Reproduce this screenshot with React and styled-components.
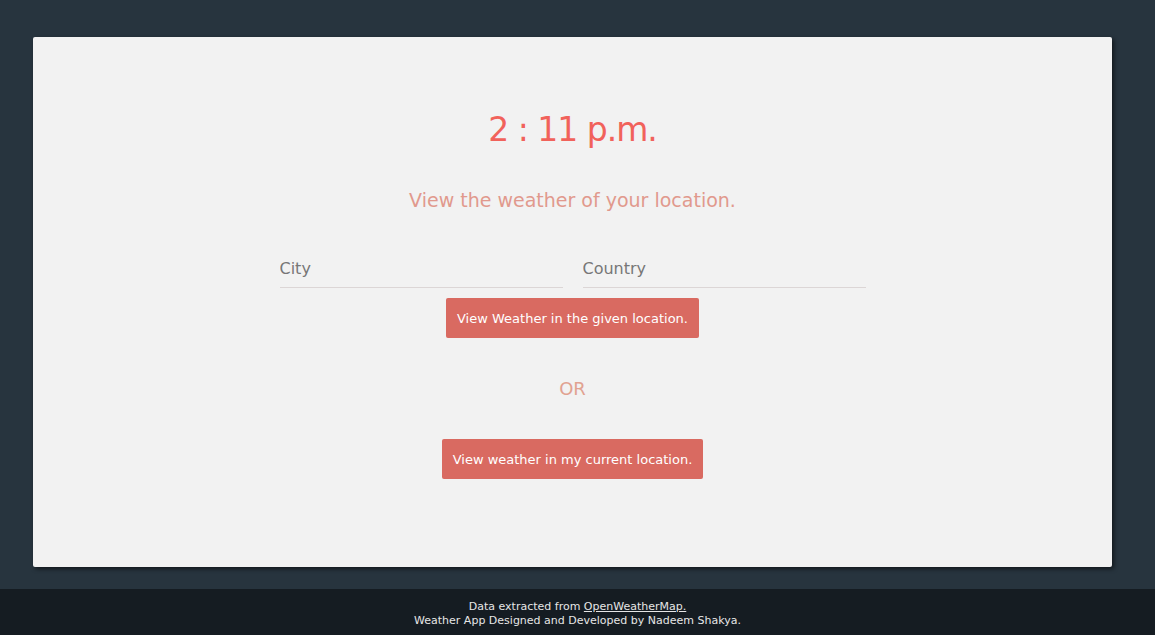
import React from "react";
import styled, { createGlobalStyle } from "styled-components";

const Global = createGlobalStyle`
  html, body { margin: 0; padding: 0; }
  body {
    background: #27343e;
    font-family: "DejaVu Sans", "Noto Sans", sans-serif;
    min-height: 635px;
  }
`;

const Page = styled.div`
  display: flex;
  flex-direction: column;
  min-height: 635px;
`;

const Main = styled.main`
  flex: 1;
  padding: 37px 43px 22px 33px;
`;

const Card = styled.section`
  background: #f2f2f2;
  border-radius: 2px;
  box-shadow: 2px 2px 4px rgba(0, 0, 0, 0.55);
  height: 530px;
  box-sizing: border-box;
  display: flex;
  flex-direction: column;
  align-items: center;
  padding-top: 67px;
`;

const Time = styled.h1`
  margin: 0;
  font-weight: 400;
  font-size: 33px;
  letter-spacing: -1px;
  line-height: 52px;
  color: #f1625b;
`;

const Subtitle = styled.p`
  margin: 32px 0 0;
  font-size: 19px;
  line-height: 24px;
  color: #e1998d;
`;

const Fields = styled.div`
  display: flex;
  gap: 20px;
  margin-top: 47px;
`;

const Input = styled.input`
  width: 283px;
  box-sizing: border-box;
  border: none;
  border-bottom: 1px solid #dcd6d6;
  background: transparent;
  padding: 0 0 8px;
  font-family: inherit;
  font-size: 16px;
  line-height: 20px;
  color: #555;
  outline: none;
  &::placeholder { color: #777; }
`;

const Button = styled.button`
  border: none;
  border-radius: 2px;
  background: #d96a61;
  color: #fff;
  font-family: inherit;
  font-size: 13px;
  height: 40px;
  padding: 0 11px;
  margin-top: ${(p) => p.$mt}px;
  cursor: pointer;
`;

const Or = styled.div`
  margin-top: 40px;
  font-size: 18px;
  line-height: 22px;
  color: #e1a291;
`;

const Footer = styled.footer`
  background: #151c22;
  height: 46px;
  box-sizing: border-box;
  padding-top: 11px;
  text-align: center;
  color: #e6e6e6;
  font-size: 11px;
  line-height: 14px;
`;

const Link = styled.a`
  color: #e6e6e6;
  text-decoration: underline;
`;

export default function App() {
  return (
    <Page>
      <Global />
      <Main>
        <Card>
          <Time>2 : 11 p.m.</Time>
          <Subtitle>View the weather of your location.</Subtitle>
          <Fields>
            <Input placeholder="City" />
            <Input placeholder="Country" />
          </Fields>
          <Button $mt={10}>View Weather in the given location.</Button>
          <Or>OR</Or>
          <Button $mt={39}>View weather in my current location.</Button>
        </Card>
      </Main>
      <Footer>
        <div>
          Data extracted from <Link href="#">OpenWeatherMap.</Link>
        </div>
        <div>Weather App Designed and Developed by Nadeem Shakya.</div>
      </Footer>
    </Page>
  );
}
